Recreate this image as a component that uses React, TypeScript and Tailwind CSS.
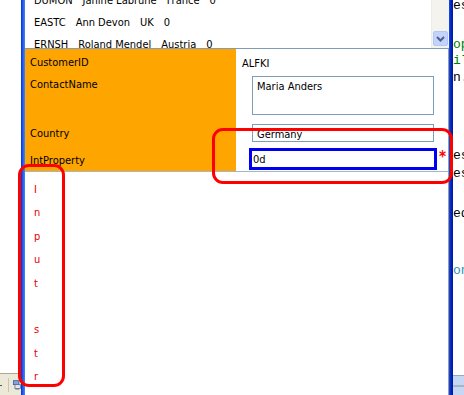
const rows = [
  ["DUMON", "Janine Labrune", "France", "0"],
  ["EASTC", "Ann Devon", "UK", "0"],
  ["ERNSH", "Roland Mendel", "Austria", "0"],
];

const errorText = "Input string was not in a correct format.";

const code: { t: string; c: string; mt: string }[] = [
  { t: "es", c: "text-black", mt: "mt-[-2px]" },
  { t: "op", c: "text-[#008000]", mt: "mt-[23px]" },
  { t: "il", c: "text-[#008000]", mt: "mt-[0px]" },
  { t: "n.", c: "text-black", mt: "mt-[1px]" },
  { t: "es", c: "text-black", mt: "mt-[62px]" },
  { t: "es", c: "text-black", mt: "mt-[2px]" },
  { t: "ed", c: "text-black", mt: "mt-[24px]" },
  { t: "on", c: "text-[#2b91af]", mt: "mt-[41px]" },
];

export default function App() {
  return (
    <div className="relative w-[464px] h-[395px] overflow-hidden bg-white flex text-[11px] leading-[14px] text-black font-['DejaVu_Sans_Condensed','DejaVu_Sans',sans-serif] font-stretch-condensed">
      {/* left desktop strip */}
      <div className="w-[21px] flex flex-col shrink-0">
        <div className="flex-1 bg-white" />
        <div className="h-[22px] bg-[#ece9d8] border-t border-[#aca899] flex items-center gap-[3px]">
          <div className="w-[3px] h-[1px] bg-[#555] mt-[2px]" />
          <div className="w-[1px] h-[14px] bg-[#c8c5b4] ml-[3px]" />
          <svg width="10" height="14" viewBox="0 0 10 14" className="ml-[1px]">
            <rect x="0.5" y="1.5" width="7" height="5" fill="#7fa3e0" stroke="#3a5a9a" />
            <rect x="2.5" y="6.5" width="7" height="5" fill="#dfe6f2" stroke="#5a6a8a" />
            <rect x="3" y="12" width="5" height="1" fill="#8090a8" />
          </svg>
        </div>
      </div>

      {/* window left border */}
      <div className="w-[4px] shrink-0 bg-[linear-gradient(to_right,#0a2cc8,#1d5cf0_45%,#4a86f6)]" />

      {/* main window content */}
      <div className="w-[424px] shrink-0 flex flex-col">
        {/* list box */}
        <div className="h-[49px] flex border-b border-[#7f9db9]">
          <div className="flex-1 overflow-hidden bg-white">
            <div className="mt-[-10px]">
              {rows.map((r, i) => (
                <div key={i} className="h-[22px] flex items-center gap-[10px] pl-[9px] whitespace-nowrap">
                  {r.map((c, j) => (
                    <span key={j}>{c}</span>
                  ))}
                </div>
              ))}
            </div>
          </div>
          <div className="w-[18px] bg-[#f4f3ee] border-l border-[#eeede5] flex flex-col justify-end items-center pb-[2px]">
            <div className="w-[15px] h-[15px] rounded-[2px] bg-[#c3d3fd] border border-[#b4c6f3] flex items-center justify-center">
              <svg width="9" height="6" viewBox="0 0 9 6">
                <path d="M1 1 L4.5 4.5 L8 1" fill="none" stroke="#4d6185" strokeWidth="2" />
              </svg>
            </div>
          </div>
        </div>

        {/* form + error area */}
        <div className="flex-1 flex flex-col border-r border-[#9c9c9c]">
          <div className="flex flex-col">
            <div className="h-[24px] flex">
              <div className="w-[211px] bg-[#ffa500] pl-[5px] pt-[7px]">CustomerID</div>
              <div className="flex-1 pl-[6px] pt-[8px]">ALFKI</div>
            </div>
            <div className="h-[47px] flex">
              <div className="w-[211px] bg-[#ffa500] pl-[5px] pt-[5px]">ContactName</div>
              <div className="flex-1 pl-[16px] pt-[3px]">
                <div className="w-[182px] h-[39px] border border-[#7f9db9] pl-[4px] pt-[3px]">Maria Anders</div>
              </div>
            </div>
            <div className="h-[25px] flex">
              <div className="w-[211px] bg-[#ffa500] pl-[5px] pt-[7px]">Country</div>
              <div className="flex-1 pl-[16px] pt-[4px]">
                <div className="w-[182px] h-[18px] border border-[#7f9db9] pl-[4px] pt-[3px] leading-[13px]">Germany</div>
              </div>
            </div>
            <div className="h-[26px] flex">
              <div className="w-[211px] bg-[#ffa500] pl-[5px] pt-[9px]">IntProperty</div>
              <div className="flex-1 pl-[13px] pt-[3px] flex items-start">
                <div className="w-[188px] h-[22px] border-[3px] border-[#0000f0] pl-[1px] pt-[2px] leading-[14px] bg-white">0d</div>
                <span className="ml-[2px] mt-[2px] text-[15px] leading-[14px] text-[#f00] font-bold">*</span>
              </div>
            </div>
          </div>
          <div className="flex-1 border-t border-[#a3b6cf] pt-[6px] pl-[9px] overflow-hidden text-[#e60000]">
            {errorText.split("").map((ch, i) => (
              <div key={i} className="h-[23.4px] leading-[23.4px]">
                {ch === " " ? "\u00a0" : ch}
              </div>
            ))}
          </div>
        </div>
      </div>

      {/* window right border */}
      <div className="w-[4px] shrink-0 bg-[linear-gradient(to_right,#1a4de6,#0024c0_50%,#001a9a)]" />

      {/* code editor strip */}
      <div className="w-[11px] shrink-0 flex flex-col overflow-hidden bg-white font-['Liberation_Mono',monospace] text-[13px] leading-[16px]">
        {code.map((l, i) => (
          <div key={i} className={`h-[16px] whitespace-nowrap ${l.mt} ${l.c}`}>
            {l.t}
          </div>
        ))}
        <div className="mt-auto h-[20px] bg-[#c6d7f4] border-t border-[#9aa8bc] flex flex-col">
          <div className="h-[9px]" />
          <div className="h-[2px] bg-[#a9b4c4]" />
        </div>
      </div>

      {/* annotations */}
      <div className="absolute left-[212px] top-[128px] w-[241px] h-[56px] border-[3px] border-[#ff0000] rounded-[11px] pointer-events-none" />
      <div className="absolute left-[18px] top-[164px] w-[47px] h-[223px] border-[3px] border-[#ff0000] rounded-[11px] pointer-events-none" />
    </div>
  );
}
